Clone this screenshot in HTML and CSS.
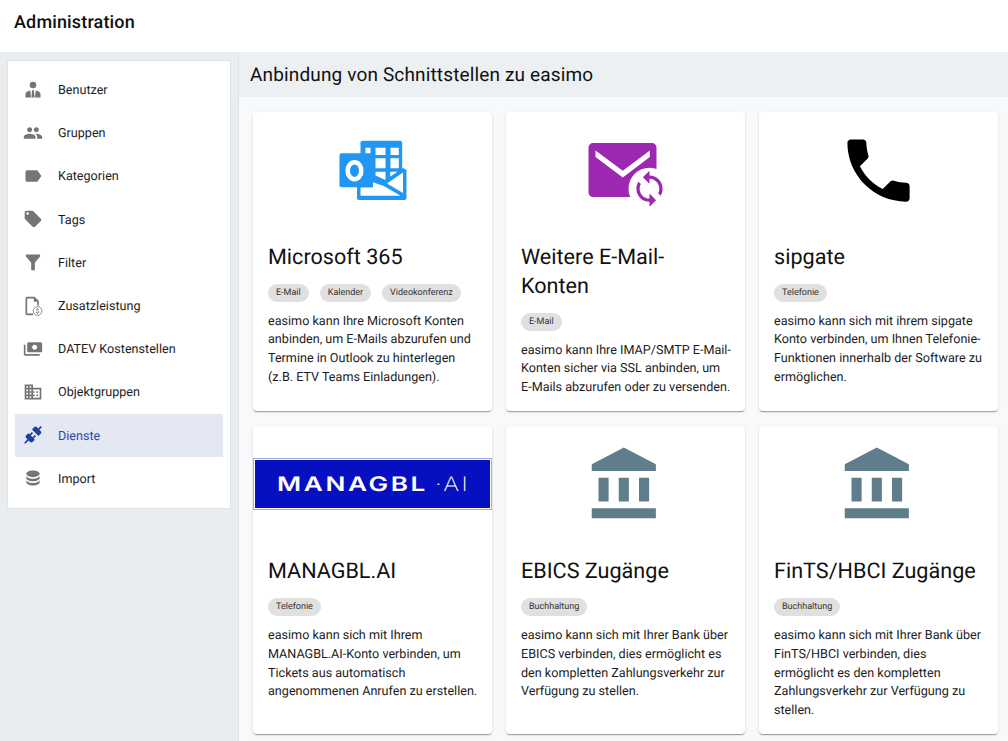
FILE: index.html
```html
<!DOCTYPE html>
<html lang="de">
<head>
  <meta charset="UTF-8" />
  <meta name="viewport" content="width=device-width, initial-scale=1.0" />
  <title>Administration</title>
  <link rel="stylesheet" href="styles.css">
</head>
<body>

  <!-- === HEADER === -->
  <header class="topbar">Administration</header>

  <div class="layout">

    <!-- === SIDEBAR === -->
    <aside class="sidebar">
      <nav class="side-card">
        <a class="side-item">
          <svg class="side-icon" viewBox="0 0 24 24"><circle cx="12" cy="6" r="4"/><path d="M3 21v-4.200c0-2.300 2.700-3.700 5.800-4.200L9.600 21zM21 21v-4.200c0-2.300-2.700-3.700-5.800-4.200L14.400 21zM10.900 12.400h2.200l.8 8.600h-3.800z"/></svg>
          <span>Benutzer</span>
        </a>
        <a class="side-item">
          <svg class="side-icon" viewBox="0 0 24 24"><path d="M16 11c1.660 0 2.990-1.340 2.990-3S17.660 5 16 5c-1.660 0-3 1.340-3 3s1.340 3 3 3zm-8 0c1.660 0 2.990-1.340 2.990-3S9.660 5 8 5C6.340 5 5 6.340 5 8s1.340 3 3 3zm0 2c-2.330 0-7 1.170-7 3.500V19h14v-2.500c0-2.330-4.670-3.500-7-3.500zm8 0c-.29 0-.62.02-.97.05 1.160.84 1.970 1.970 1.970 3.450V19h6v-2.500c0-2.330-4.670-3.500-7-3.500z"/></svg>
          <span>Gruppen</span>
        </a>
        <a class="side-item">
          <svg class="side-icon" viewBox="0 0 24 24"><path d="M17.630 5.840C17.270 5.330 16.670 5 16 5L5 5.010C3.900 5.010 3 5.900 3 7v10c0 1.100.9 1.990 2 1.990L16 19c.67 0 1.270-.33 1.630-.84L22 12l-4.370-6.160z"/></svg>
          <span>Kategorien</span>
        </a>
        <a class="side-item">
          <svg class="side-icon" viewBox="0 0 24 24"><path d="M21.410 11.580l-9-9C12.050 2.220 11.550 2 11 2H4c-1.100 0-2 .9-2 2v7c0 .55.22 1.050.59 1.420l9 9c.36.36.86.58 1.410.58.55 0 1.050-.22 1.410-.59l7-7c.37-.36.59-.86.59-1.410 0-.55-.23-1.060-.59-1.420zM5.500 7C4.670 7 4 6.330 4 5.500S4.670 4 5.500 4 7 4.670 7 5.500 6.330 7 5.500 7z"/></svg>
          <span>Tags</span>
        </a>
        <a class="side-item">
          <svg class="side-icon" viewBox="0 0 24 24"><path d="M3.500 3h17v2.500L14.200 13v9h-3.600l-.8-1v-8L3.500 5.500z"/></svg>
          <span>Filter</span>
        </a>
        <a class="side-item">
          <svg class="side-icon" viewBox="0 0 24 24"><path d="M5 1h9l5 5v5.500h-2V7h-4V3H5v18h7v2H5c-1.100 0-2-.9-2-2V3c0-1.100.9-2 2-2z"/><circle cx="17.500" cy="18" r="5.200" fill="none" stroke="#757575" stroke-width="1"/><path d="M17 14.500h1v1c.8.2 1.300.7 1.400 1.300h-1c-.1-.4-.5-.6-.9-.6-.6 0-1 .3-1 .7 0 .4.4.6 1.100.8.9.2 1.800.6 1.800 1.500 0 .8-.6 1.200-1.400 1.400v.9h-1v-.9c-.8-.2-1.500-.7-1.500-1.500h1c0 .4.5.7 1 .7.7 0 1-.3 1-.6 0-.4-.3-.6-1.100-.8-.9-.2-1.800-.6-1.800-1.500 0-.7.6-1.200 1.400-1.400z"/></svg>
          <span>Zusatzleistung</span>
        </a>
        <a class="side-item">
          <svg class="side-icon" viewBox="0 0 24 24"><g transform="matrix(-1 0 0 1 24 0)"><path d="M19 14V6c0-1.100-.9-2-2-2H3c-1.100 0-2 .9-2 2v8c0 1.100.9 2 2 2h14c1.100 0 2-.9 2-2zm-9-1c-1.660 0-3-1.340-3-3s1.340-3 3-3 3 1.340 3 3-1.340 3-3 3zm13-6v11c0 1.100-.9 2-2 2H4v-2h17V7h2z"/></g></svg>
          <span>DATEV Kostenstellen</span>
        </a>
        <a class="side-item">
          <svg class="side-icon" viewBox="0 0 24 24"><path d="M12 7V3H2v18h20V7H10zM6 19H4v-2h2v2zm0-4H4v-2h2v2zm0-4H4V9h2v2zm0-4H4V5h2v2zm4 12H8v-2h2v2zm0-4H8v-2h2v2zm0-4H8V9h2v2zm0-4H8V5h2v2zm10 12h-8v-2h2v-2h-2v-2h2v-2h-2V9h8v10zm-2-8h-2v2h2v-2zm0 4h-2v2h2v-2z"/></svg>
          <span>Objektgruppen</span>
        </a>
        <a class="side-item active">
          <svg class="side-icon" viewBox="0 0 24 24"><path d="M21.400 7.500C22.200 8.300 22.200 9.600 21.400 10.300L18.600 13.100L10.800 5.300L13.600 2.500C14.400 1.700 15.700 1.700 16.400 2.500L18.200 4.300L21.200 1.300L22.600 2.700L19.600 5.700L21.400 7.500M15.600 13.300L14.200 11.900L11.400 14.700L9.300 12.600L12.100 9.800L10.700 8.400L7.900 11.200L6.400 9.800L3.600 12.600C2.800 13.400 2.800 14.700 3.600 15.400L5.400 17.200L1.400 21.200L2.800 22.600L6.800 18.600L8.600 20.400C9.400 21.200 10.700 21.200 11.400 20.400L14.200 17.600L12.800 16.200L15.600 13.300Z"/></svg>
          <span>Dienste</span>
        </a>
        <a class="side-item">
          <svg class="side-icon" viewBox="0 0 24 24"><path d="M12,3C7.580,3 4,4.790 4,7C4,9.210 7.580,11 12,11C16.420,11 20,9.210 20,7C20,4.790 16.420,3 12,3M4,9V12C4,14.210 7.580,16 12,16C16.420,16 20,14.210 20,12V9C20,11.210 16.420,13 12,13C7.580,13 4,11.210 4,9M4,14V17C4,19.210 7.580,21 12,21C16.420,21 20,19.210 20,17V14C20,16.210 16.420,18 12,18C7.580,18 4,16.210 4,14Z"/></svg>
          <span>Import</span>
        </a>
      </nav>
    </aside>

    <!-- === CONTENT === -->
    <main class="content">
      <h2 class="content-title">Anbindung von Schnittstellen zu easimo</h2>

      <div class="card-grid">

        <article class="card">
          <div class="card-media">
            <svg class="card-icon" viewBox="0 0 80 80">
              <path fill="#2196f3" d="M29.500 10.700H67.200c1 0 2 1 2 2V42H27.500V12.700c0-1 1-2 2-2z"/>
              <path fill="#2196f3" d="M27.500 42h30v10h-30z"/>
              <path fill="#fff" d="M32.500 17.700h5v7.300h-5zM42.500 17.700h10v7.300h-10zM57.500 17.700h8.300v7.300h-8.300zM42.500 28.300h10v10h-10zM57.500 28.300h8.300v10h-8.300zM42.500 41.700h10v8.300l-10-4.500zM57.500 41.700h8.300l-8.300 5.800z"/>
              <path fill="#2196f3" d="M24 52v16c0 1 1 2 2 2h45.500c1 0 2-1 2-2V40L70 38 50.800 51 40 46v6z"/>
              <path fill="#fff" d="M27.500 57.300H40v-5l10.800 3.800 16.700 9.600H27.500zM54 53.500l16-11v20.500z"/>
              <rect fill="#2196f3" x="6.500" y="23.300" width="33.500" height="34" rx="2"/>
              <ellipse cx="21.500" cy="40.700" rx="6.800" ry="8.500" fill="none" stroke="#fff" stroke-width="4.500"/>
            </svg>
          </div>
          <div class="card-body">
            <h3 class="card-title">Microsoft 365</h3>
            <div class="chips"><span class="chip">E-Mail</span><span class="chip">Kalender</span><span class="chip">Videokonferenz</span></div>
            <p class="card-text">easimo kann Ihre Microsoft Konten anbinden, um E-Mails abzurufen und Termine in Outlook zu hinterlegen (z.B. ETV Teams Einladungen).</p>
          </div>
        </article>

        <article class="card">
          <div class="card-media">
            <svg class="card-icon" viewBox="0 0 80 80">
              <path fill="#9c27b0" d="M7.500 13h58c3 0 5 2 5 5v44c0 3-2 5-5 5h-58c-3 0-5-2-5-5V18c0-3 2-5 5-5z"/>
              <path fill="#fff" d="M9.500 20.500l27.300 20.300 27-20.300v6.500L36.800 47.500 9.500 27z"/>
              <circle cx="63.500" cy="58.700" r="21" fill="#fff"/>
              <g fill="#9c27b0" transform="translate(43.800 39) scale(1.640)">
                <path d="M12 4V1L8 5l4 4V6c3.310 0 6 2.690 6 6 0 1.010-.25 1.970-.7 2.800l1.460 1.460C19.540 15.030 20 13.570 20 12c0-4.420-3.580-8-8-8zm0 14c-3.310 0-6-2.690-6-6 0-1.010.25-1.970.7-2.800L5.240 7.740C4.460 8.970 4 10.430 4 12c0 4.420 3.580 8 8 8v3l4-4-4-4v3z"/>
              </g>
            </svg>
          </div>
          <div class="card-body">
            <h3 class="card-title">Weitere E-Mail-Konten</h3>
            <div class="chips"><span class="chip">E-Mail</span></div>
            <p class="card-text">easimo kann Ihre IMAP/SMTP E-Mail-Konten sicher via SSL anbinden, um E-Mails abzurufen oder zu versenden.</p>
          </div>
        </article>

        <article class="card">
          <div class="card-media">
            <svg class="card-icon phone" viewBox="0 0 24 24"><path d="M6.620 10.790c1.440 2.830 3.760 5.140 6.590 6.590l2.200-2.200c.27-.27.67-.36 1.020-.24 1.120.37 2.330.57 3.570.57.55 0 1 .45 1 1V20c0 .55-.45 1-1 1-9.390 0-17-7.610-17-17 0-.55.45-1 1-1h3.500c.55 0 1 .45 1 1 0 1.250.2 2.450.57 3.570.11.35.03.74-.25 1.020l-2.200 2.200z"/></svg>
          </div>
          <div class="card-body">
            <h3 class="card-title">sipgate</h3>
            <div class="chips"><span class="chip">Telefonie</span></div>
            <p class="card-text">easimo kann sich mit ihrem sipgate Konto verbinden, um Ihnen Telefonie-Funktionen innerhalb der Software zu ermöglichen.</p>
          </div>
        </article>

        <article class="card">
          <div class="card-media">
            <div class="logo">
              <svg class="logo-svg" viewBox="0 0 235 48">
                <text class="logo-main" x="22" y="31" textLength="151" lengthAdjust="spacingAndGlyphs">MANAGBL</text>
                <text class="logo-sub" x="180" y="31" textLength="35" lengthAdjust="spacingAndGlyphs">·AI</text>
              </svg>
            </div>
          </div>
          <div class="card-body">
            <h3 class="card-title">MANAGBL.AI</h3>
            <div class="chips"><span class="chip">Telefonie</span></div>
            <p class="card-text">easimo kann sich mit Ihrem MANAGBL.AI-Konto verbinden, um Tickets aus automatisch angenommenen Anrufen zu erstellen.</p>
          </div>
        </article>

        <article class="card">
          <div class="card-media">
            <svg class="card-icon bank" viewBox="0 0 24 24"><path d="M4 10v7h3v-7H4zm6 0v7h3v-7h-3zM2 22h19v-3H2v3zm14-12v7h3v-7h-3zm-4.500-9L2 6v2h19V6l-9.500-5z"/></svg>
          </div>
          <div class="card-body">
            <h3 class="card-title">EBICS Zugänge</h3>
            <div class="chips"><span class="chip">Buchhaltung</span></div>
            <p class="card-text">easimo kann sich mit Ihrer Bank über EBICS verbinden, dies ermöglicht es den kompletten Zahlungsverkehr zur Verfügung zu stellen.</p>
          </div>
        </article>

        <article class="card">
          <div class="card-media">
            <svg class="card-icon bank" viewBox="0 0 24 24"><path d="M4 10v7h3v-7H4zm6 0v7h3v-7h-3zM2 22h19v-3H2v3zm14-12v7h3v-7h-3zm-4.500-9L2 6v2h19V6l-9.500-5z"/></svg>
          </div>
          <div class="card-body">
            <h3 class="card-title">FinTS/HBCI Zugänge</h3>
            <div class="chips"><span class="chip">Buchhaltung</span></div>
            <p class="card-text">easimo kann sich mit Ihrer Bank über FinTS/HBCI verbinden, dies ermöglicht es den kompletten Zahlungsverkehr zur Verfügung zu stellen.</p>
          </div>
        </article>

      </div>
    </main>
  </div>

</body>
</html>
```

FILE: styles.css
```css
* {
  margin: 0;
  padding: 0;
  box-sizing: border-box;
}

body, html {
  height: 100%;
  overflow: hidden;
  font-family: Roboto, sans-serif;
  text-rendering: geometricPrecision;
}

body {
  background: #e9edf0;
  color: #111;
}

.topbar {
  height: 52px;
  background: white;
  padding: 13px 14px 0;
  font-size: 18px;
  font-weight: 500;
  line-height: 20px;
  letter-spacing: 0.15px;
}

.layout {
  display: flex;
  height: calc(100% - 52px);
}

/* sidebar */
.sidebar {
  width: 239px;
  flex-shrink: 0;
  padding: 8px 7px 0;
  border-right: 1px solid #dfe3e6;
}

.side-card {
  width: 224px;
  background: white;
  border: 1px solid #dfe3e6;
  padding: 7px 7px 8px;
}

.side-item {
  display: flex;
  align-items: center;
  height: 43.2px;
  padding-left: 8px;
  font-size: 12.6px;
  color: #1c1c1c;
}

.side-item span {
  padding-top: 2px;
}

.side-item.active {
  background: #e3e8f3;
  color: #2a4aa8;
}

.side-icon {
  width: 20px;
  height: 20px;
  margin-right: 15px;
  fill: #757575;
  flex-shrink: 0;
}

.side-item.active .side-icon {
  fill: #1e3fa3;
}

/* content */
.content {
  flex: 1;
  min-width: 0;
  background: #f8f9fa;
}

.content-title {
  height: 45px;
  padding-left: 11px;
  font-size: 19px;
  font-weight: 400;
  line-height: 45px;
  letter-spacing: 0.15px;
  background: #ecf0f2;
}

.card-grid {
  display: grid;
  grid-template-columns: repeat(3, 239px);
  gap: 15px 14px;
  padding: 15px 14px;
}

.card {
  background: white;
  border-radius: 4px;
  box-shadow: 0 2px 1px -1px rgba(0, 0, 0, 0.2), 0 1px 1px 0 rgba(0, 0, 0, 0.14), 0 1px 3px 0 rgba(0, 0, 0, 0.12);
  overflow: hidden;
}

.card-media {
  height: 116px;
  display: flex;
  align-items: center;
  justify-content: center;
}

.card-icon {
  width: 80px;
  height: 80px;
  display: block;
}

.card-icon.phone {
  width: 83px;
  height: 83px;
  fill: black;
}

.card-icon.bank {
  width: 81px;
  height: 81px;
  fill: #607d8b;
}

.logo {
  width: 100%;
  height: 52px;
  background: #0610c0;
  border: 2px solid white;
  outline: 1px solid #a4aae8;
  outline-offset: -1px;
}

.logo-svg {
  display: block;
  width: 100%;
  height: 100%;
  fill: white;
}

.logo-main {
  font-family: Inter, sans-serif;
  font-size: 20px;
  font-weight: 600;
  letter-spacing: 2px;
}

.logo-sub {
  font-family: Inter, sans-serif;
  font-size: 20px;
  font-weight: 200;
  letter-spacing: 2px;
}

.card-body {
  padding: 15px 12px 13px 15px;
}

.card-title {
  font-size: 21.6px;
  font-weight: 400;
  line-height: 29px;
  margin-bottom: 12px;
  padding-right: 4px;
}

.chips {
  display: flex;
  gap: 11px;
  margin-bottom: 10.5px;
}

.chip {
  height: 18px;
  line-height: 18px;
  padding: 0 8px;
  border-radius: 9px;
  background: #e0e0e0;
  color: #333;
  font-size: 9px;
}

.card-text {
  font-size: 12.6px;
  line-height: 18.9px;
  color: #1c1c1c;
}
```
